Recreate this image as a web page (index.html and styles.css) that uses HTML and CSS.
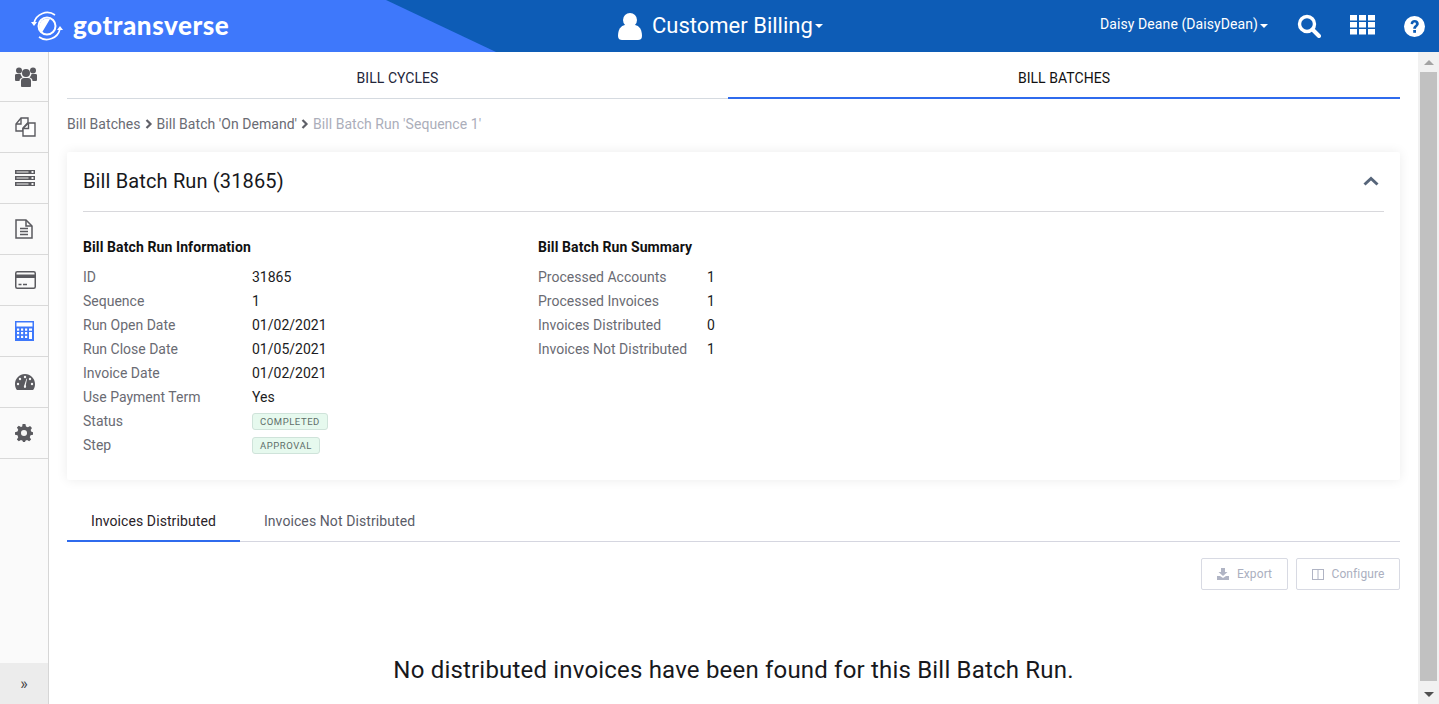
FILE: index.html
```html
<!DOCTYPE html>
<html lang="en">
<head>
    <meta charset="UTF-8">
    <meta name="viewport" content="width=device-width, initial-scale=1.0">
    <title>Bill Batch Run</title>
    <link rel="stylesheet" href="styles.css">
</head>
<body>

<div class="topbar">
    <div class="brand">
        <svg class="brand-mark" width="34" height="32" viewBox="0 0 34 32">
            <path d="M4 13 A13.5 13.5 0 0 1 25 5" fill="none" stroke="#fff" stroke-width="1.6"/>
            <path d="M1 12 L7 12 L4 16 Z" fill="#fff"/>
            <path d="M30 19 A13.5 13.5 0 0 1 9 27" fill="none" stroke="#fff" stroke-width="1.6"/>
            <path d="M27 20 L33 20 L30 16 Z" fill="#fff"/>
            <circle cx="17" cy="16" r="8.5" fill="none" stroke="#fff" stroke-width="2"/>
            <path d="M20 9 A8 8 0 0 0 17 8.5 A8 8 0 0 0 12 22.5 Z" fill="#fff"/>
        </svg>
        <span class="brand-name">gotransverse</span>
    </div>
    <div class="module">
        <svg width="24" height="28" viewBox="0 0 24 28"><circle cx="12" cy="8" r="7" fill="#fff"/><path d="M0 24 C0 15 5 13 8 13 L16 13 C19 13 24 15 24 24 C24 27 22 28 20 28 L4 28 C2 28 0 27 0 24 Z" fill="#fff"/></svg>
        <span class="module-name">Customer Billing</span>
        <span class="caret"></span>
    </div>
    <div class="user-area">
        <span class="user-name">Daisy Deane (DaisyDean)</span>
        <span class="caret"></span>
        <svg class="search-icon" width="24" height="24" viewBox="0 0 24 24"><circle cx="10" cy="10" r="7.5" fill="none" stroke="#fff" stroke-width="3.4"/><path d="M15.5 15.5 L22 22" stroke="#fff" stroke-width="4" stroke-linecap="round"/></svg>
        <svg class="grid-icon" width="25" height="20" viewBox="0 0 25 20" fill="#fff">
            <rect width="7" height="5.5"/><rect x="9" width="7" height="5.5"/><rect x="18" width="7" height="5.5"/>
            <rect y="7" width="7" height="5.5"/><rect x="9" y="7" width="7" height="5.5"/><rect x="18" y="7" width="7" height="5.5"/>
            <rect y="14" width="7" height="5.5"/><rect x="9" y="14" width="7" height="5.5"/><rect x="18" y="14" width="7" height="5.5"/>
        </svg>
        <svg class="help-icon" width="21" height="21" viewBox="0 0 21 21"><circle cx="10.5" cy="10.5" r="10.5" fill="#fff"/><path d="M6.6 8 C6.6 5.5 8.4 4 10.6 4 C13 4 14.8 5.5 14.8 7.7 C14.8 10.2 12 10.5 12 12.8 L9.2 12.8 C9.2 9.6 11.9 9.4 11.9 7.9 C11.9 7.1 11.4 6.6 10.5 6.6 C9.7 6.6 9.2 7.2 9.1 8.3 Z" fill="#0d5cb6"/><rect x="9.2" y="14" width="2.8" height="2.8" fill="#0d5cb6"/></svg>
    </div>
</div>

<div class="app-body">
    <div class="sidebar">
        <div class="side-item">
            <svg width="22" height="20" viewBox="0 0 22 20" fill="#5a5a5f"><circle cx="4" cy="3.5" r="3"/><circle cx="18" cy="3.5" r="3"/><circle cx="11" cy="6" r="4"/><path d="M0 8 C0 7 1 7 2 7 L5.5 7 C6 9 7 10 7.5 10.5 C5.5 11 4.5 12 4.5 14 L1.5 14 C0.5 14 0 13.5 0 13 Z"/><path d="M22 8 C22 7 21 7 20 7 L16.5 7 C16 9 15 10 14.5 10.5 C16.5 11 17.5 12 17.5 14 L20.5 14 C21.5 14 22 13.5 22 13 Z"/><path d="M6 14 C6 12 7 11 9 11 L13 11 C15 11 16 12 16 14 L16 19 C16 19.5 15.5 20 15 20 L7 20 C6.5 20 6 19.5 6 19 Z"/></svg>
        </div>
        <div class="side-item">
            <svg width="21" height="20" viewBox="0 0 21 20" fill="none" stroke="#5a5a5f" stroke-width="1.4"><path d="M6 1 L13 1 L13 5.5 L8 11 L8 14 L1 14 L1 7 Z"/><path d="M6 1 L6 7 L1 7"/><path d="M13.5 6 L20 6 L20 19 L8 19 L8 11.5 Z" fill="#fff"/><path d="M13.5 6 L13.5 11.5 L8 11.5"/></svg>
        </div>
        <div class="side-item">
            <svg width="20" height="16" viewBox="0 0 20 16"><g fill="#5a5a5f"><rect width="20" height="4"/><rect y="6" width="20" height="4"/><rect y="12" width="20" height="4"/></g><g fill="#f2f2f2"><rect x="1.5" y="1.5" width="12" height="1"/><rect x="1.5" y="7.5" width="12" height="1"/><rect x="1.5" y="13.5" width="12" height="1"/><rect x="16.5" y="1" width="2" height="2"/><rect x="16.5" y="7" width="2" height="2"/><rect x="16.5" y="13" width="2" height="2"/></g></svg>
        </div>
        <div class="side-item">
            <svg width="18" height="20" viewBox="0 0 18 20" fill="none" stroke="#5a5a5f" stroke-width="1.5"><path d="M1 1 L11 1 L17 7 L17 19 L1 19 Z"/><path d="M11 1 L11 7 L17 7"/><path d="M5 9.5 L13 9.5 M5 12.5 L13 12.5 M5 15.5 L13 15.5" stroke-width="1.6"/></svg>
        </div>
        <div class="side-item">
            <svg width="21" height="18" viewBox="0 0 21 18"><rect x="0.75" y="0.75" width="19.5" height="16.5" rx="1.5" fill="none" stroke="#5a5a5f" stroke-width="1.5"/><rect x="1" y="3.5" width="19" height="3.5" fill="#5a5a5f"/><path d="M3.5 13.5 L6.5 13.5 M8 13.5 L12 13.5" stroke="#5a5a5f" stroke-width="1.5"/></svg>
        </div>
        <div class="side-item">
            <svg width="19" height="20" viewBox="0 0 19 20"><rect width="19" height="20" fill="#3e78fb"/><rect x="1.5" y="1.5" width="16" height="4" fill="#fff"/><g fill="#fff"><rect x="2" y="7.5" width="2.2" height="2.2"/><rect x="6" y="7.5" width="2.2" height="2.2"/><rect x="10" y="7.5" width="2.2" height="2.2"/><rect x="14" y="7.5" width="3" height="2.2"/><rect x="2" y="11" width="2.2" height="2.2"/><rect x="6" y="11" width="2.2" height="2.2"/><rect x="10" y="11" width="2.2" height="2.2"/><rect x="14" y="11" width="3" height="7"/><rect x="2" y="14.8" width="2.2" height="2.2"/><rect x="6" y="14.8" width="2.2" height="2.2"/><rect x="10" y="14.8" width="2.2" height="2.2"/></g></svg>
        </div>
        <div class="side-item">
            <svg width="20" height="16" viewBox="0 0 20 16"><path d="M10 0 C4.5 0 0 4.5 0 10 C0 12 0.5 14 1.5 15.5 C1.8 16 2.2 16 2.5 16 L17.5 16 C17.8 16 18.2 16 18.5 15.5 C19.5 14 20 12 20 10 C20 4.5 15.5 0 10 0 Z" fill="#5a5a5f"/><g fill="#f6f6f6"><circle cx="10" cy="3" r="1.2"/><circle cx="5" cy="5" r="1.2"/><circle cx="15" cy="5" r="1.2"/><circle cx="3" cy="10" r="1.2"/><circle cx="17" cy="10" r="1.2"/><path d="M11.5 4.5 L12 5 L10.8 11 C11.5 12 11 14 10 14 C8.8 14 8.5 12 9.4 11 Z"/></g></svg>
        </div>
        <div class="side-item">
            <svg width="18" height="18" viewBox="0 0 19 19"><path d="M8 0 L11 0 L11.6 2.6 L13.6 3.4 L15.9 2 L17.9 4.1 L16.5 6.3 L17.3 8.3 L19 8.6 L19 11.4 L16.4 12 L15.6 14 L17 16.3 L15 18.3 L12.7 16.9 L11 17.6 L10.6 19 L8.4 19 L8 17.6 L6.3 16.9 L4 18.3 L2 16.3 L3.4 14 L2.6 12 L0 11.4 L0 8.6 L2.6 8 L3.4 6 L2 3.8 L4 1.8 L6.3 3.2 L7.6 2.6 Z" fill="#5a5a5f"/><circle cx="9.5" cy="9.5" r="3.2" fill="#f6f6f6"/></svg>
        </div>
        <div class="side-toggle">»</div>
    </div>

    <div class="main">
        <div class="top-tabs">
            <div class="top-tab">BILL CYCLES</div>
            <div class="top-tab active">BILL BATCHES</div>
        </div>

        <div class="breadcrumb">
            <span>Bill Batches</span>
            <svg width="8" height="10" viewBox="0 0 8 10"><path d="M1.5 1 L5.5 5 L1.5 9" fill="none" stroke="#5f6068" stroke-width="2.2"/></svg>
            <span>Bill Batch 'On Demand'</span>
            <svg width="8" height="10" viewBox="0 0 8 10"><path d="M1.5 1 L5.5 5 L1.5 9" fill="none" stroke="#5f6068" stroke-width="2.2"/></svg>
            <span class="current">Bill Batch Run 'Sequence 1'</span>
        </div>

        <div class="card">
            <div class="card-head">
                <h2>Bill Batch Run (31865)</h2>
                <svg width="16" height="10" viewBox="0 0 16 10"><path d="M1.5 8.5 L8 2.5 L14.5 8.5" fill="none" stroke="#56657a" stroke-width="3"/></svg>
            </div>
            <div class="card-body">
                <div class="info-col info-left">
                    <h3>Bill Batch Run Information</h3>
                    <div class="row"><span class="lbl">ID</span><span>31865</span></div>
                    <div class="row"><span class="lbl">Sequence</span><span>1</span></div>
                    <div class="row"><span class="lbl">Run Open Date</span><span>01/02/2021</span></div>
                    <div class="row"><span class="lbl">Run Close Date</span><span>01/05/2021</span></div>
                    <div class="row"><span class="lbl">Invoice Date</span><span>01/02/2021</span></div>
                    <div class="row"><span class="lbl">Use Payment Term</span><span>Yes</span></div>
                    <div class="row"><span class="lbl">Status</span><span class="tag">COMPLETED</span></div>
                    <div class="row"><span class="lbl">Step</span><span class="tag">APPROVAL</span></div>
                </div>
                <div class="info-col info-right">
                    <h3>Bill Batch Run Summary</h3>
                    <div class="row"><span class="lbl">Processed Accounts</span><span>1</span></div>
                    <div class="row"><span class="lbl">Processed Invoices</span><span>1</span></div>
                    <div class="row"><span class="lbl">Invoices Distributed</span><span>0</span></div>
                    <div class="row"><span class="lbl">Invoices Not Distributed</span><span>1</span></div>
                </div>
            </div>
        </div>

        <div class="sub-tabs">
            <div class="sub-tab active">Invoices Distributed</div>
            <div class="sub-tab">Invoices Not Distributed</div>
        </div>

        <div class="actions">
            <div class="btn btn-export">
                <svg width="12" height="12" viewBox="0 0 12 12" fill="#b0b4c4"><path d="M4 0 L8 0 L8 4 L10.5 4 L6 8 L1.5 4 L4 4 Z"/><path d="M0 8 L3 8 L6 10 L9 8 L12 8 L12 12 L0 12 Z"/></svg>
                Export
            </div>
            <div class="btn btn-config">
                <svg width="12" height="11" viewBox="0 0 12 11" fill="none" stroke="#b0b4c4" stroke-width="1"><rect x="0.5" y="0.5" width="11" height="10"/><path d="M6 0.5 L6 10.5"/></svg>
                Configure
            </div>
        </div>

        <div class="empty-msg">No distributed invoices have been found for this Bill Batch Run.</div>
    </div>

    <div class="scrollbar">
        <div class="arrow-up"></div>
        <div class="thumb"></div>
        <div class="arrow-down"></div>
    </div>
</div>

</body>
</html>
```

FILE: styles.css
```css
html, body {
    height: 100%;
}
body {
    margin: 0;
    font-family: Roboto, Arial, sans-serif;
    font-size: 14px;
    color: #1b1c22;
    background-color: white;
    display: flex;
    flex-direction: column;
    overflow: hidden;
}

/* top bar */
.topbar {
    height: 52px;
    flex: none;
    display: flex;
    align-items: center;
    color: white;
    background-color: #0d5cb6;
    position: relative;
}
.topbar::before {
    content: "";
    position: absolute;
    left: 0;
    top: 0;
    width: 496px;
    height: 52px;
    background-color: #3e78fb;
    clip-path: polygon(0 0, 386px 0, 496px 52px, 0 52px);
}
.brand {
    position: relative;
    display: flex;
    align-items: center;
    width: 560px;
    padding-left: 30px;
    box-sizing: border-box;
}
.brand-mark {
    margin-right: 9px;
}
.brand-name {
    font-family: Lato, Arial, sans-serif;
    font-weight: 900;
    font-size: 26px;
    letter-spacing: 0.55px;
    margin-top: -3px;
}
.module {
    display: flex;
    align-items: center;
    margin-left: 58px;
}
.module-name {
    font-size: 22px;
    margin-left: 10px;
    margin-top: -1px;
}
.caret {
    display: inline-block;
    width: 0;
    height: 0;
    margin-left: 2px;
    border-left: 4px solid transparent;
    border-right: 4px solid transparent;
    border-top: 4px solid white;
}
.user-area {
    display: flex;
    align-items: center;
    margin-left: auto;
    padding-right: 14px;
}
.user-name {
    font-size: 14px;
    letter-spacing: 0.08px;
    margin-top: -4px;
}
.search-icon {
    margin-left: 29px;
}
.grid-icon {
    margin-left: 29px;
    margin-top: -3px;
}
.help-icon {
    margin-left: 29px;
}

/* sidebar */
.app-body {
    flex: 1;
    display: flex;
    min-height: 0;
}
.sidebar {
    width: 48px;
    flex: none;
    display: flex;
    flex-direction: column;
    background-color: #fafafa;
    border-right: 1px solid #d6d6d6;
}
.side-item {
    height: 50px;
    flex: none;
    display: flex;
    align-items: center;
    border-bottom: 1px solid #d9d9d9;
    padding-left: 15px;
}
.side-item:first-child {
    height: 49px;
}
.side-toggle {
    margin-top: auto;
    height: 41px;
    display: flex;
    align-items: center;
    justify-content: center;
    background-color: #ececec;
    color: #444;
    font-size: 16px;
}

/* main */
.main {
    flex: 1;
    min-width: 0;
    padding: 0 18px;
    overflow: hidden;
}
.top-tabs {
    display: grid;
    grid-template-columns: 661px 1fr;
    height: 46px;
    border-bottom: 1px solid #d5dae0;
}
.top-tab {
    display: flex;
    align-items: center;
    justify-content: center;
    height: 47px;
    box-sizing: border-box;
    padding-top: 6px;
    letter-spacing: 0.05px;
    color: #23263a;
    border-bottom: 2px solid transparent;
}
.top-tab.active {
    color: #111;
    border-bottom-color: #2f6bed;
}
.breadcrumb {
    display: flex;
    align-items: center;
    gap: 4px;
    height: 50px;
    padding-bottom: 3px;
    letter-spacing: 0.04px;
    color: #6a6b73;
}
.breadcrumb .current {
    color: #abaeba;
}
.card {
    background-color: white;
    padding: 0 16px;
    height: 328px;
    box-sizing: border-box;
    box-shadow: 0 0 12px rgba(0, 0, 0, 0.08);
    border-radius: 2px;
}
.card-head {
    height: 57px;
    padding: 0 5px 2px 0;
    display: flex;
    align-items: center;
    justify-content: space-between;
    border-bottom: 1px solid #d8d8dc;
}
.card-head h2 {
    margin: 0;
    font-size: 20px;
    font-weight: 400;
    letter-spacing: 0.14px;
    color: #17181c;
}
.card-body {
    display: flex;
    padding-top: 23px;
}
.info-left {
    width: 455px;
}
h3 {
    margin: 0 0 6px;
    font-size: 14px;
    line-height: 24px;
    font-weight: 700;
    letter-spacing: 0.1px;
    color: #111;
}
.row {
    display: flex;
    align-items: center;
    height: 24px;
}
.lbl {
    width: 169px;
    color: #6a6b73;
}
.tag {
    font-size: 9.5px;
    letter-spacing: 0.55px;
    line-height: 15px;
    padding: 0 7px;
    color: #5f6f6a;
    background-color: #e6f9ee;
    border: 1px solid #cfe3da;
    border-radius: 3px;
}
.sub-tabs {
    display: flex;
    margin-top: 21px;
    height: 40px;
    letter-spacing: 0.09px;
    border-bottom: 1px solid #d5d6e0;
}
.sub-tab {
    padding: 0 24px;
    line-height: 40px;
    height: 40px;
    color: #5a5c68;
}
.sub-tab.active {
    color: #2a2228;
    border-bottom: 2px solid #2f6bed;
    height: 39px;
}
.actions {
    display: flex;
    justify-content: flex-end;
    gap: 8px;
    margin-top: 16px;
}
.btn {
    height: 32px;
    box-sizing: border-box;
    display: flex;
    align-items: center;
    justify-content: center;
    gap: 8px;
    font-size: 12px;
    letter-spacing: 0.1px;
    color: #abafc0;
    border: 1px solid #d8dae3;
    border-radius: 2px;
}
.btn-export {
    width: 87px;
}
.btn-config {
    width: 104px;
}
.empty-msg {
    margin-top: 64px;
    text-align: center;
    font-size: 24px;
    line-height: 32px;
    letter-spacing: 0.19px;
    color: #17181c;
}

/* scrollbar */
.scrollbar {
    width: 21px;
    flex: none;
    display: flex;
    flex-direction: column;
    align-items: center;
    background-color: #f1f1f1;
}
.arrow-up {
    margin: 8px 0 7px;
    border-left: 5px solid transparent;
    border-right: 5px solid transparent;
    border-bottom: 5px solid #a3a3a3;
}
.thumb {
    flex: 1;
    width: 17px;
    background-color: #c1c1c1;
}
.arrow-down {
    margin: 11px 0 7px;
    border-left: 5px solid transparent;
    border-right: 5px solid transparent;
    border-top: 5px solid #505050;
}
```
